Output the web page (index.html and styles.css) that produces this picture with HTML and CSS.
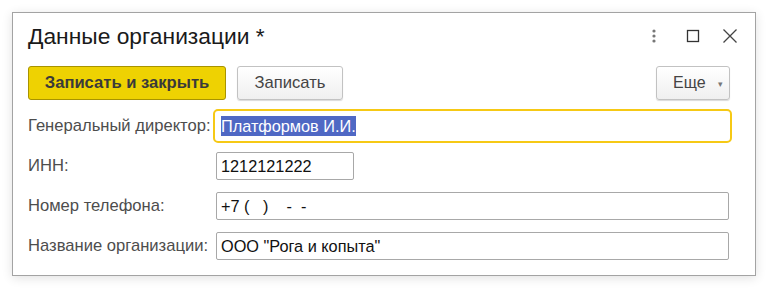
FILE: index.html
```html
<html>
<head>
    <title>Данные организации</title>
    <link rel="stylesheet" href="styles.css">
</head>
<body>
    <div class="window">
        <div class="titlebar">
            <div class="title">Данные организации *</div>
            <div class="title-icons">
                <svg class="ico dots" width="14" height="16" viewBox="0 0 14 16">
                    <circle cx="7" cy="3" r="1.6" fill="#777"/>
                    <circle cx="7" cy="8" r="1.6" fill="#777"/>
                    <circle cx="7" cy="13" r="1.6" fill="#777"/>
                </svg>
                <svg class="ico" width="14" height="16" viewBox="0 0 14 16">
                    <rect x="1.5" y="2.5" width="11" height="11" fill="none" stroke="#333" stroke-width="1.3"/>
                </svg>
                <svg class="ico" width="16" height="16" viewBox="0 0 16 16">
                    <path d="M1.5 1.5 L14.5 14.5 M14.5 1.5 L1.5 14.5" stroke="#444" stroke-width="1.3" fill="none"/>
                </svg>
            </div>
        </div>

        <div class="toolbar">
            <button class="btn btn-main">Записать и закрыть</button>
            <button class="btn btn-save">Записать</button>
            <div class="spacer"></div>
            <button class="btn btn-more">Еще<span class="caret">&#9662;</span></button>
        </div>

        <div class="form">
            <div class="label">Генеральный директор:</div>
            <div class="field focused"><span class="selected">Платформов И.И.</span></div>

            <div class="label">ИНН:</div>
            <div class="field short">1212121222</div>

            <div class="label">Номер телефона:</div>
            <div class="field">+7 (&nbsp;&nbsp;&nbsp;)&nbsp;&nbsp;&nbsp;&nbsp;-&nbsp;&nbsp;-</div>

            <div class="label">Название организации:</div>
            <div class="field">ООО "Рога и копыта"</div>
        </div>
    </div>
</body>
</html>
```

FILE: styles.css
```css
body {
    margin: 0;
    padding: 12px 0 0 12px;
    background-color: white;
    font-family: Arial, "Liberation Sans", sans-serif;
}

.window {
    width: 742px;
    height: 262px;
    border: 1px solid #a3a3a3;
    background-color: white;
    box-shadow: 0 2px 10px rgba(0, 0, 0, 0.12);
    box-sizing: content-box;
}

.titlebar {
    display: flex;
    align-items: center;
    height: 40px;
    padding: 6px 17px 0 15px;
    box-sizing: border-box;
}

.title {
    flex: 1;
    font-size: 22.8px;
    color: #1a1a1a;
}

.title-icons {
    display: flex;
    align-items: center;
    gap: 22px;
}

.dots {
    margin-right: 3px;
}

.toolbar {
    display: flex;
    align-items: center;
    padding: 13px 25px 0 15px;
    gap: 11px;
}

.spacer {
    flex: 1;
}

.btn {
    height: 34px;
    font-family: Arial, "Liberation Sans", sans-serif;
    font-size: 16.6px;
    border-radius: 3px;
    padding: 0 10px;
    cursor: pointer;
}

.btn-main {
    width: 198px;
    background-color: #eed202;
    border: 1px solid #a89300;
    color: #3a3a3a;
    font-weight: bold;
}

.btn-save, .btn-more {
    background: linear-gradient(to bottom, #ffffff, #efefef);
    border: 1px solid #c2c2c2;
    box-shadow: 0 1px 1px rgba(0, 0, 0, 0.15);
    color: #444;
}

.btn-save {
    width: 106px;
}

.btn-more {
    width: 74px;
    padding: 0 0 0 16px;
    font-size: 16px;
    text-align: left;
}

.caret {
    font-size: 9px;
    color: #777;
    margin-left: 12px;
    vertical-align: middle;
}

.form {
    display: grid;
    grid-template-columns: 188px 513px;
    row-gap: 12px;
    padding: 12px 0 0 15px;
    align-items: center;
}

.label {
    font-size: 16.6px;
    color: #4d4d4d;
}

.field {
    height: 28px;
    border: 1px solid #a8a8a8;
    border-radius: 2px;
    box-sizing: border-box;
    padding: 0 4px;
    font-size: 16.3px;
    line-height: 26px;
    color: #111;
    white-space: nowrap;
}

.field.short {
    width: 138px;
}

.field.focused {
    border-color: transparent;
    outline: 2px solid #f6c915;
    outline-offset: 1px;
}

.selected {
    background-color: #4f68c4;
    color: white;
    padding: 1px 0;
}
```
